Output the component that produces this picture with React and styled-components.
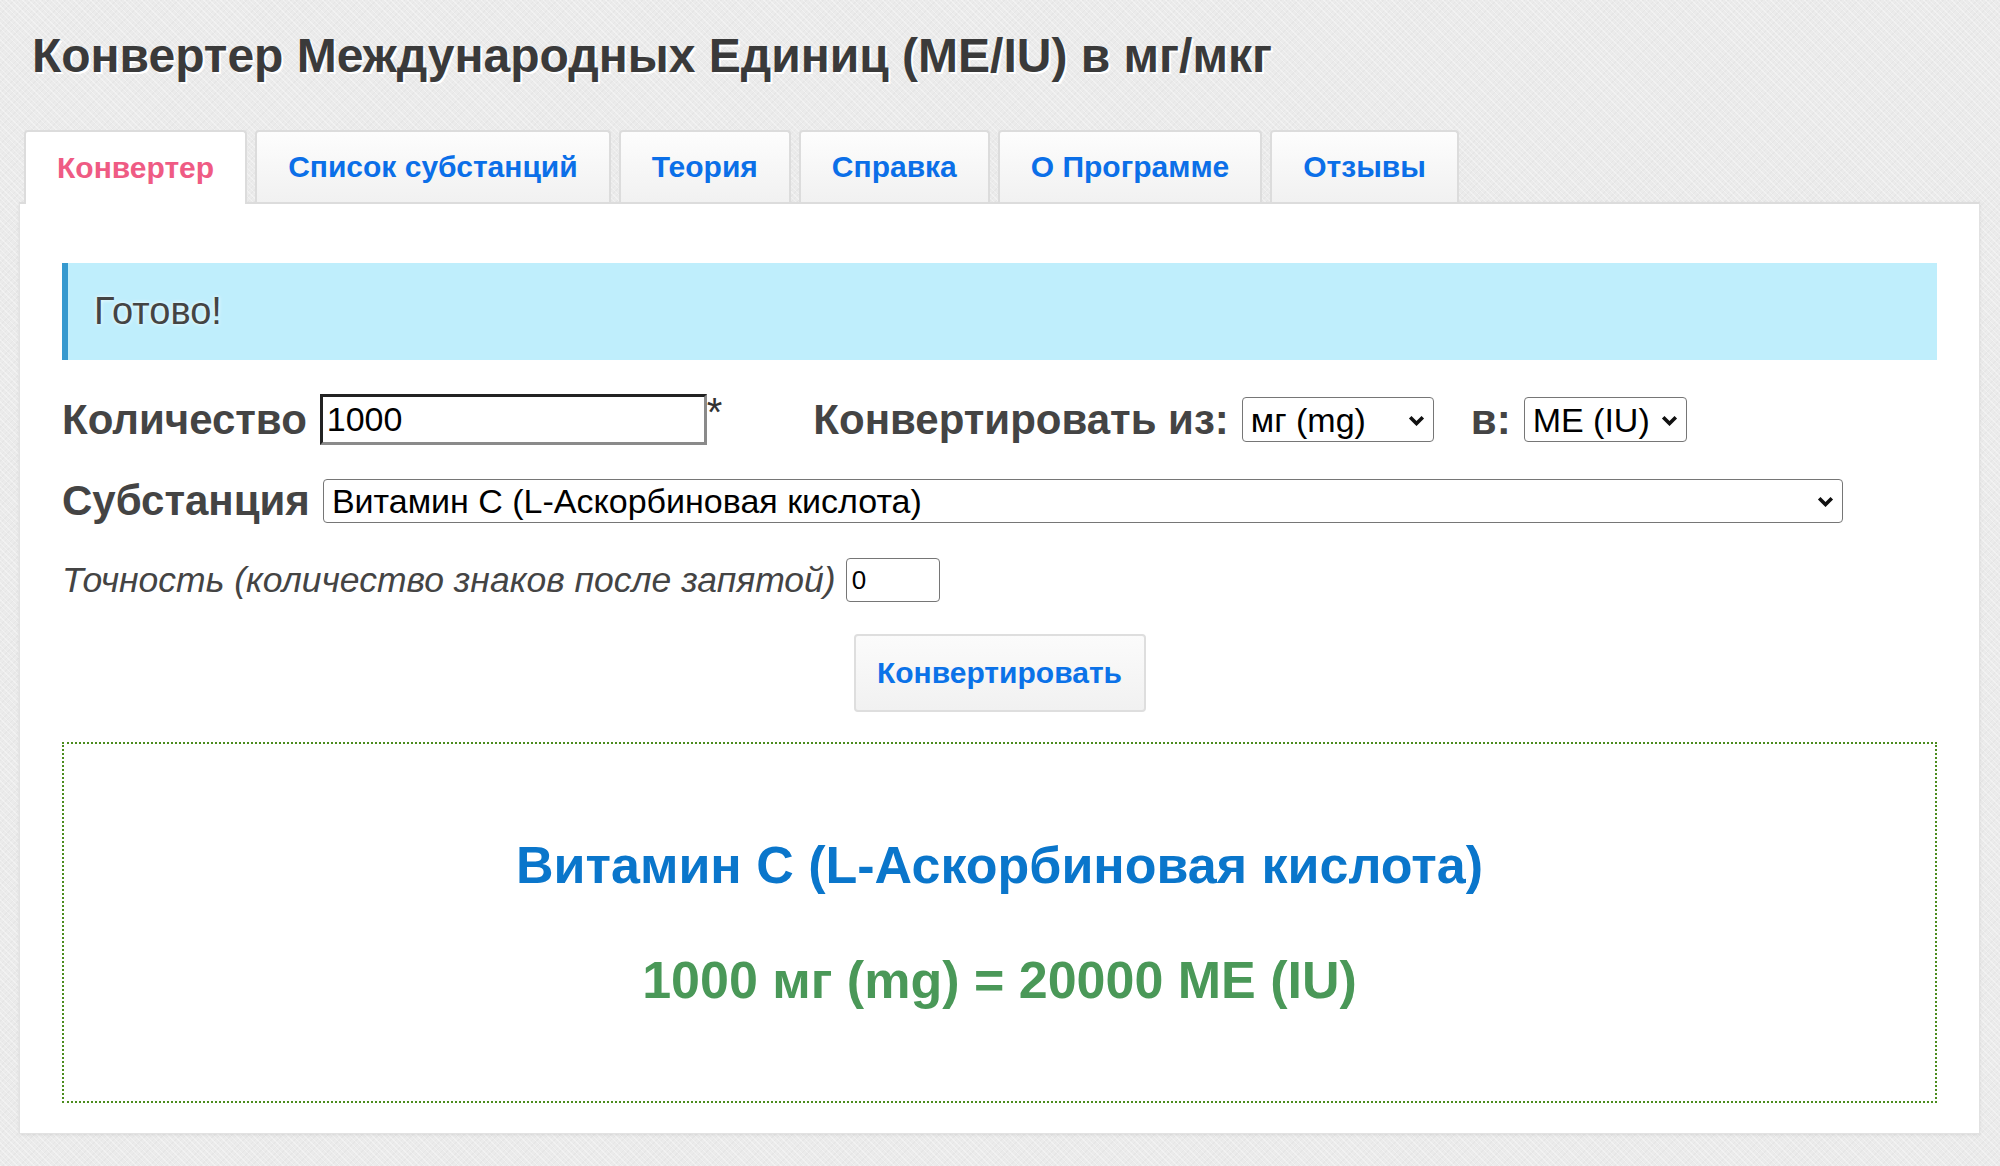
import React from 'react'
import styled, { createGlobalStyle } from 'styled-components'

const GlobalStyle = createGlobalStyle`
    html, body {
        margin: 0;
        padding: 0;
    }

    body {
        min-height: 1166px;
        font-family: "Liberation Sans", Arial, sans-serif;
        color: #444;
        background-color: #ebebeb;
        background-image:
            repeating-linear-gradient(45deg, rgba(255, 255, 255, 0.35) 0 1px, transparent 1px 4px),
            repeating-linear-gradient(-45deg, rgba(0, 0, 0, 0.025) 0 1px, transparent 1px 4px);
    }
`

const Page = styled.div`
    padding: 0 20px 0 19px;
`

const Title = styled.h1`
    margin: 28px 0 0 13px;
    font-size: 48px;
    line-height: 56px;
    font-weight: bold;
    color: #3a3a3a;
    text-shadow: 2px 2px 0 #fff;
`

const Tabs = styled.nav`
    position: relative;
    z-index: 1;
    display: flex;
    align-items: flex-start;
    gap: 8px;
    height: 74px;
    margin: 46px 0 -2px 5px;
`

const Tab = styled.a`
    box-sizing: border-box;
    display: flex;
    align-items: center;
    height: ${p => (p.$active ? '74px' : '72px')};
    padding: 0 31px;
    border: 2px solid #dcdcdc;
    border-bottom: none;
    border-radius: 4px 4px 0 0;
    background: ${p => (p.$active ? '#fff' : 'linear-gradient(#fdfdfd, #f1f1f1)')};
    color: ${p => (p.$active ? '#ef5b84' : '#0b6fe8')};
    font-size: 30px;
    font-weight: bold;
    text-decoration: none;
    cursor: pointer;
`

const Panel = styled.main`
    display: flex;
    flex-direction: column;
    padding: 59px 42px 30px 42px;
    background: #fff;
    border: 1px solid #e2e2e2;
    border-top: 2px solid #dcdcdc;
    box-shadow: 0 1px 3px rgba(0, 0, 0, 0.08);
`

const Alert = styled.div`
    display: flex;
    align-items: center;
    height: 97px;
    padding-left: 26px;
    border-left: 6px solid #3599cf;
    background: #bfeefc;
    font-size: 38px;
    color: #444;
    text-shadow: 0 0 4px #fff;
`

const Row = styled.div`
    display: flex;
    align-items: center;
    height: ${p => p.$height}px;
    margin-top: ${p => p.$gap}px;
`

const Label = styled.label`
    font-size: 42px;
    font-weight: bold;
    color: #444;
    margin-left: ${p => p.$offset || 0}px;
    margin-right: 13px;
    white-space: nowrap;
`

const Hint = styled.label`
    font-size: 35.5px;
    font-style: italic;
    color: #444;
    margin-right: 10px;
    white-space: nowrap;
`

const AmountInput = styled.input`
    box-sizing: border-box;
    width: 387px;
    height: 51px;
    padding: 0 4px;
    border: 3px solid;
    border-color: #222 #8a8a8a #8a8a8a #222;
    font-family: "Liberation Sans", Arial, sans-serif;
    font-size: 34px;
    color: #000;
    outline: none;
`

const Star = styled.span`
    align-self: flex-start;
    margin-top: -2px;
    font-size: 40px;
    line-height: 40px;
    color: #333;
`

const SelectBox = styled.div`
    position: relative;
    display: inline-flex;
    flex: none;
    width: ${p => p.$width}px;
    height: ${p => p.$height || 45}px;

    svg {
        position: absolute;
        right: 9px;
        top: 50%;
        margin-top: -5px;
        pointer-events: none;
    }
`

const Select = styled.select`
    box-sizing: border-box;
    width: 100%;
    height: 100%;
    padding: 0 30px 0 8px;
    border: 1.5px solid #767676;
    border-radius: 4px;
    background: #fff;
    appearance: none;
    font-family: "Liberation Sans", Arial, sans-serif;
    font-size: 34px;
    color: #000;
`

const SmallInput = styled.input`
    box-sizing: border-box;
    width: 94px;
    height: 44px;
    padding: 0 5px;
    border: 1.5px solid #767676;
    border-radius: 4px;
    font-family: "Liberation Sans", Arial, sans-serif;
    font-size: 26px;
    color: #000;
`

const ConvertButton = styled.button`
    align-self: center;
    box-sizing: border-box;
    width: 292px;
    height: 78px;
    margin-top: 32px;
    border: 2px solid #dedede;
    border-radius: 4px;
    background: linear-gradient(#fbfbfb, #f1f1f1);
    font-family: "Liberation Sans", Arial, sans-serif;
    font-size: 30px;
    font-weight: bold;
    color: #0b72e8;
    cursor: pointer;
`

const Result = styled.section`
    box-sizing: border-box;
    height: 361px;
    margin-top: 30px;
    padding-top: 91px;
    border: 2px dotted #4b8c1e;
    text-align: center;
`

const ResultTitle = styled.h2`
    margin: 0;
    font-size: 52px;
    line-height: 60px;
    font-weight: bold;
    color: #0a76cb;
`

const ResultValue = styled.p`
    margin: 55px 0 0;
    font-size: 52px;
    line-height: 60px;
    font-weight: bold;
    color: #4a9858;
`

const Chevron = () => (
    <svg width="17" height="11" viewBox="0 0 17 11">
        <path d="M2.2 2.2l6.3 6.3 6.3-6.3" fill="none" stroke="#111" strokeWidth="3.6" />
    </svg>
)

const Dropdown = ({ width, height, value, options }) => (
    <SelectBox $width={width} $height={height}>
        <Select defaultValue={value}>
            {options.map(([v, text]) => (
                <option key={v} value={v}>{text}</option>
            ))}
        </Select>
        <Chevron />
    </SelectBox>
)

const tabs = ['Конвертер', 'Список субстанций', 'Теория', 'Справка', 'О Программе', 'Отзывы']

const units = [['mg', 'мг (mg)'], ['mcg', 'мкг (mcg)'], ['iu', 'МЕ (IU)']]

const substances = [
    ['c', 'Витамин С (L-Аскорбиновая кислота)'],
    ['a', 'Витамин A (Ретинол)'],
    ['d', 'Витамин D3 (Холекальциферол)'],
    ['e', 'Витамин E (d-альфа-токоферол)'],
]

const App = () => {
    return (
        <Page>
            <GlobalStyle />
            <Title>Конвертер Международных Единиц (МЕ/IU) в мг/мкг</Title>
            <Tabs>
                {tabs.map((name, i) => (
                    <Tab key={name} $active={i === 0}>{name}</Tab>
                ))}
            </Tabs>
            <Panel>
                <Alert>Готово!</Alert>
                <Row $height={51} $gap={34}>
                    <Label>Количество</Label>
                    <AmountInput defaultValue="1000" />
                    <Star>*</Star>
                    <Label $offset={91}>Конвертировать из:</Label>
                    <Dropdown width={192} value="mg" options={units} />
                    <Label $offset={37}>в:</Label>
                    <Dropdown width={163} value="iu" options={units} />
                </Row>
                <Row $height={44} $gap={34}>
                    <Label>Субстанция</Label>
                    <Dropdown width={1520} height={44} value="c" options={substances} />
                </Row>
                <Row $height={44} $gap={35}>
                    <Hint>Точность (количество знаков после запятой)</Hint>
                    <SmallInput defaultValue="0" />
                </Row>
                <ConvertButton>Конвертировать</ConvertButton>
                <Result>
                    <ResultTitle>Витамин С (L-Аскорбиновая кислота)</ResultTitle>
                    <ResultValue>1000 мг (mg) = 20000 МЕ (IU)</ResultValue>
                </Result>
            </Panel>
        </Page>
    )
}

export default App
